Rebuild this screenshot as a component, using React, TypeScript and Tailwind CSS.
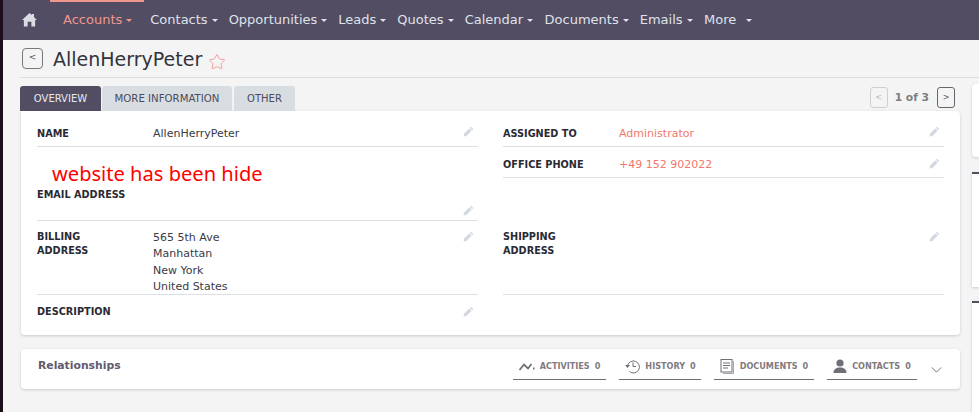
import { Star } from 'lucide-react'

const dejavu = "font-['DejaVu_Sans',sans-serif]"
const condensed = "font-['DejaVu_Sans_Condensed','DejaVu_Sans',sans-serif] font-stretch-condensed"

const navItems = [
  { name: 'Contacts', className: 'ml-[18px]' },
  { name: 'Opportunities', className: 'ml-[11px]' },
  { name: 'Leads', className: 'ml-[11px]' },
  { name: 'Quotes', className: 'ml-[11px]' },
  { name: 'Calendar', className: 'ml-[11px]' },
  { name: 'Documents', className: 'ml-[11.5px]' },
  { name: 'Emails', className: 'ml-[11px]' },
]

function Caret({ className = 'border-t-[#dfe3ea]' }: { className?: string }) {
  return <span className={`ml-[4px] inline-block h-0 w-0 border-x-[3px] border-t-[3px] border-x-transparent ${className}`} />
}

function Pencil() {
  return (
    <svg viewBox="0 0 12 12" className="h-[11px] w-[11px] fill-[#d3d8e0]">
      <path d="M8.6 0.8 L11.2 3.4 L10 4.6 L7.4 2 Z M6.8 2.6 L9.4 5.2 L3.8 10.8 L0.6 11.4 L1.2 8.2 Z" />
    </svg>
  )
}

function Row({
  label,
  height,
  children,
  border = true,
  pencilClass = '',
}: {
  label: React.ReactNode
  height: string
  children?: React.ReactNode
  border?: boolean
  pencilClass?: string
}) {
  return (
    <div className={`relative flex ${height} ${border ? 'border-b border-[#dcdfe4]' : ''}`}>
      <div className={`w-[116px] shrink-0 text-[10.8px] leading-[14px] font-bold text-[#2a2a33] ${condensed}`}>{label}</div>
      <div className="flex-1 text-[11px] text-[#3a3a45]">{children}</div>
      <div className={`absolute right-[4px] ${pencilClass || 'top-[15px]'}`}>
        <Pencil />
      </div>
    </div>
  )
}

function RelTab({ icon, label, width }: { icon: React.ReactNode; label: string; width: string }) {
  return (
    <div className={`flex h-[31px] ${width} items-center justify-center gap-[5px] border-b border-[#6f6f76] pt-[4px] ${condensed}`}>
      {icon}
      <span className="pt-[1px] text-[9px] font-bold text-[#817a80]">{label}</span>
      <span className="pt-[1px] text-[9px] font-bold text-[#817a80]">0</span>
    </div>
  )
}

export default function App() {
  return (
    <div className={`flex h-[412px] w-[979px] overflow-hidden bg-[#f4f4f4] ${dejavu}`}>
      <div className="w-[3px] shrink-0 bg-[#1a0f1a]" />
      <div className="flex min-w-0 flex-1 flex-col">
        <nav className="relative flex h-10 shrink-0 items-center bg-[#534d64] text-[13px] text-[#dfe3ea]">
          <div className="absolute top-0 left-[47px] h-[2px] w-[94px] bg-[#f0978c]" />
          <svg viewBox="0 0 16 15" className="mb-[1px] ml-[19px] h-[15px] w-[15px] fill-[#dcdde2]">
            <path d="M8 0.5 L10.5 2.8 V1.5 H12.8 V5 L16 8 H14 V15 H10 V10 H6 V15 H2 V8 H0 Z" />
          </svg>
          <span className="ml-[26px] flex items-center text-[#f0978c]">
            Accounts
            <Caret className="border-t-[#f0978c]" />
          </span>
          {navItems.map((item) => (
            <span key={item.name} className={`flex items-center ${item.className}`}>
              {item.name}
              <Caret />
            </span>
          ))}
          <span className="ml-[11.5px] flex items-center">
            More
            <Caret className="ml-[10px] border-t-[#dfe3ea]" />
          </span>
        </nav>

        <div className="ml-[17px] flex h-[38px] shrink-0 items-center border-b border-[#dddddd]">
          <button className="ml-[2px] flex h-[21px] w-[21px] items-center justify-center rounded-[4px] border border-[#77777c] pb-[2px] text-[9px] text-[#55555c]">
            &lt;
          </button>
          <h1 className="mt-[2px] ml-[10px] text-[19px] leading-none text-[#33333b]">AllenHerryPeter</h1>
          <Star className="mt-[6px] ml-[6px] h-[18px] w-[18px] text-[#f0978c]" strokeWidth={1.2} />
        </div>

        <div className="flex min-h-0 flex-1 gap-[12px] pl-[17px]">
          <div className="w-[940px] shrink-0">
            <div className="flex h-[33px] items-end">
              <div className="flex h-[25px] w-[81px] items-center justify-center rounded-t-[3px] bg-[#534d64] text-[10px] text-[#e6e8ee]">
                OVERVIEW
              </div>
              <div className="ml-[1px] flex h-[25px] w-[130px] items-center justify-center rounded-t-[3px] bg-[#d8dde2] text-[10.2px] text-[#4c4a5c]">
                MORE INFORMATION
              </div>
              <div className="ml-[2px] flex h-[25px] w-[61px] items-center justify-center rounded-t-[3px] bg-[#d8dde2] text-[10px] text-[#4c4a5c]">
                OTHER
              </div>
              <div className="mb-[3px] ml-auto flex items-center pr-[5px]">
                <button className="flex h-[21px] w-[18px] items-center justify-center rounded-[3px] border border-[#cfcfd2] text-[8px] text-[#b8b8bc]">
                  &lt;
                </button>
                <span className="mt-[1px] mr-[8px] ml-[7px] text-[10.7px] font-bold text-[#7d7d82]">1 of 3</span>
                <button className="flex h-[21px] w-[18px] items-center justify-center rounded-[3px] border border-[#66666c] text-[8px] text-[#55555c]">
                  &gt;
                </button>
              </div>
            </div>

            <div className="ml-px grid h-[224px] grid-cols-[441px_441px] gap-x-[25px] rounded-tr-[4px] rounded-b-[4px] bg-white px-[16px] shadow-[0_1px_3px_rgba(60,60,80,0.22)]">
              <div className="flex flex-col">
                <Row label={<div className="pt-[16px]">NAME</div>} height="h-[36px]">
                  <div className="pt-[15px]">AllenHerryPeter</div>
                </Row>
                <Row
                  label={<div className="absolute top-[41px]">EMAIL ADDRESS</div>}
                  height="h-[74px]"
                  pencilClass="top-[58px]"
                >
                  <div className="absolute top-[13px] left-[15px] font-['Noto_Sans',sans-serif] text-[20.1px] leading-[27px] whitespace-nowrap text-[#ff0000]">
                    website has been hide
                  </div>
                </Row>
                <Row
                  label={
                    <div className="pt-[9px]">
                      BILLING
                      <br />
                      ADDRESS
                    </div>
                  }
                  height="h-[74px]"
                  pencilClass="top-[10px]"
                >
                  <div className="pt-[9px] leading-[16.4px]">
                    <div>565 5th Ave</div>
                    <div>Manhattan</div>
                    <div>New York</div>
                    <div>United States</div>
                  </div>
                </Row>
                <Row label={<div className="pt-[10px]">DESCRIPTION</div>} height="h-[40px]" border={false} pencilClass="top-[11px]" />
              </div>
              <div className="flex flex-col">
                <Row label={<div className="pt-[16px]">ASSIGNED TO</div>} height="h-[36px]">
                  <div className="pt-[15px] text-[#f2776c]">Administrator</div>
                </Row>
                <Row label={<div className="pt-[11px]">OFFICE PHONE</div>} height="h-[31px]" pencilClass="top-[11px]">
                  <div className="pt-[10px] text-[#f2776c]">+49 152 902022</div>
                </Row>
                <div className="h-[43px]" />
                <Row
                  label={
                    <div className="pt-[9px]">
                      SHIPPING
                      <br />
                      ADDRESS
                    </div>
                  }
                  height="h-[74px]"
                  pencilClass="top-[10px]"
                />
              </div>
            </div>

            <div className="mt-[14px] ml-px flex h-[40px] items-start rounded-[4px] bg-white pr-[18px] shadow-[0_1px_3px_rgba(60,60,80,0.22)]">
              <div className="mt-[9px] ml-[17px] text-[10.8px] font-bold text-[#5f5a70]">Relationships</div>
              <div className="ml-auto flex gap-[13px]">
                <RelTab
                  width="w-[93px]"
                  label="ACTIVITIES"
                  icon={
                    <svg viewBox="0 0 16 9" className="h-[9px] w-[16px] fill-none stroke-[#6f6f76] stroke-[1.8]">
                      <path d="M0.5 8 L5 2.5 L9 6.5 L12.5 2" />
                      <path d="M14 6.5 L15.5 6.5" />
                    </svg>
                  }
                />
                <RelTab
                  width="w-[82px]"
                  label="HISTORY"
                  icon={
                    <svg viewBox="0 0 16 16" className="h-[16px] w-[16px] fill-none stroke-[#6f6f76]">
                      <path d="M3.5 8 A6 6 0 1 1 5.5 13.5" />
                      <path d="M1 7 H6 L3.5 10 Z" fill="#6f6f76" stroke="none" />
                      <path d="M9 4.5 V8.5 H12" />
                    </svg>
                  }
                />
                <RelTab
                  width="w-[100px]"
                  label="DOCUMENTS"
                  icon={
                    <svg viewBox="0 0 15 15" className="h-[15px] w-[15px] fill-none stroke-[#6f6f76]">
                      <rect x="1" y="0.5" width="11" height="12.5" fill="#fff" />
                      <path d="M3 4 H10 M3 6.5 H10 M3 9 H8" />
                      <path d="M13.5 2 V14.5 H3" stroke="#a8a8ac" />
                    </svg>
                  }
                />
                <RelTab
                  width="w-[90px]"
                  label="CONTACTS"
                  icon={
                    <svg viewBox="0 0 14 14" className="h-[14px] w-[14px] fill-[#6f6f76]">
                      <circle cx="7" cy="4" r="3.6" />
                      <path d="M0.5 14 C0.5 10 3.5 8.5 7 8.5 C10.5 8.5 13.5 10 13.5 14 Z" />
                    </svg>
                  }
                />
                <svg viewBox="0 0 12 7" className="mt-[18px] ml-px h-[6px] w-[11px] fill-none stroke-[#5c5c64]">
                  <path d="M0.5 0.5 L6 6 L11.5 0.5" />
                </svg>
              </div>
            </div>
          </div>

          <div className="flex flex-1 flex-col">
            <div className="mt-[6px] h-[73px] rounded-l-[4px] bg-white shadow-[0_1px_3px_rgba(60,60,80,0.22)]" />
            <div className="mt-[15px] h-[115px] border-t-2 border-[#534d64] bg-white shadow-[0_1px_3px_rgba(60,60,80,0.22)]" />
            <div className="mt-[14px] flex-1 border-t-2 border-[#534d64] bg-white shadow-[0_1px_3px_rgba(60,60,80,0.22)]" />
          </div>
        </div>
      </div>
    </div>
  )
}
